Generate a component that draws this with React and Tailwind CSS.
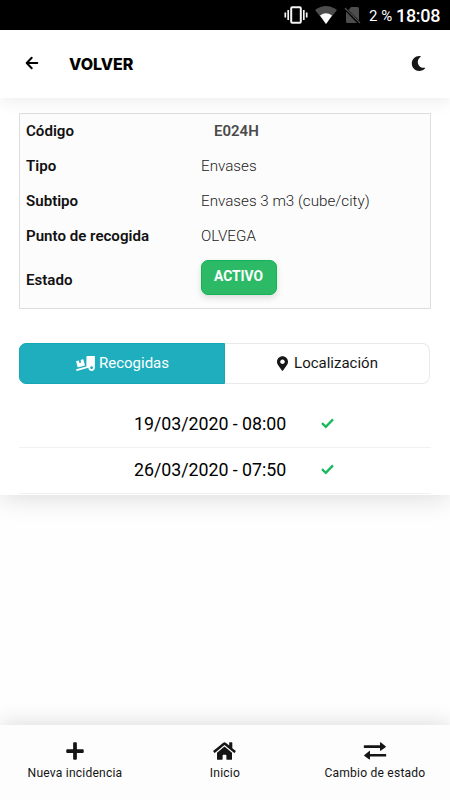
import { FaMoon, FaTruckLoading, FaMapMarkerAlt, FaPlus, FaHome } from 'react-icons/fa';

function StatusBar() {
  return (
    <div className="flex h-[30px] items-center justify-end bg-black pr-[10px] text-white">
      <svg className="h-[20px] w-[24px]" viewBox="0 0 24 20" fill="none" stroke="#f4f4f4">
        <rect x="7.2" y="2.2" width="9.6" height="15.6" rx="1" strokeWidth="2" />
        <path d="M4.2 5v10M19.8 5v10" strokeWidth="1.7" />
        <path d="M1.3 7.5v5M22.7 7.5v5" strokeWidth="1.7" />
      </svg>
      <svg className="ml-[7px] h-[18px] w-[22px]" viewBox="0 0 22 18">
        <path d="M0 4Q11-3.8 22 4L11 18Z" fill="#4d4d4d" />
        <path d="M5 9.5Q11 5 17 9.5L11 18Z" fill="#fff" />
      </svg>
      <svg className="ml-[7px] h-[18px] w-[17px]" viewBox="0 0 17 18">
        <path d="M7 1h6.5q1.5 0 1.5 1.500V14.500L4.500 4Z M2 5.500 13 17H3.500Q2 17 2 15.500Z" fill="#4d4d4d" />
        <path d="M1 2 16 17" stroke="#4d4d4d" strokeWidth="1.300" />
      </svg>
      <span className="mt-[1px] ml-[8px] w-[27px] whitespace-nowrap text-[15px] leading-[30px]">2 %</span>
      <span className="mt-[2px] w-[44px] whitespace-nowrap text-[18px] font-medium leading-[30px] tracking-[-0.3px]">18:08</span>
    </div>
  );
}

function Row({ label, children }) {
  return (
    <div className="flex h-[35px] items-center">
      <span className="w-[175px] text-[15.1px] font-semibold text-[#111]">{label}</span>
      {children}
    </div>
  );
}

function Value({ children }) {
  return <span className="text-[15.2px] font-light text-[#222]">{children}</span>;
}

function Pickup({ date }) {
  return (
    <div className="flex h-[46px] items-center border-b border-[#f1f1f1]">
      <span className="ml-[115px] w-[187px] whitespace-nowrap text-[17.8px] tracking-[-0.02px] text-black">{date}</span>
      <svg className="mb-[4px] h-[12px] w-[13px]" viewBox="0 0 13 12" fill="none" stroke="#17b95c" strokeWidth="2.3">
        <path d="M1 6.200 4.800 9.800 12 2.400" />
      </svg>
    </div>
  );
}

function NavItem({ icon, label }) {
  return (
    <div className="flex w-1/3 flex-col items-center pt-[16px] text-[#151515]">
      {icon}
      <span className="mt-[3px] whitespace-nowrap text-[12.1px] leading-[18px] tracking-[0.2px]">{label}</span>
    </div>
  );
}

export default function App() {
  return (
    <div className="flex h-[800px] w-[450px] flex-col overflow-hidden bg-[#fefefe] font-['Roboto',sans-serif]">
      <StatusBar />
      <header className="relative z-10 flex h-[68px] shrink-0 items-center bg-white pl-[25px] pr-[24px] shadow-[0_4px_16px_rgba(0,0,0,0.07)]">
        <svg className="mb-[2px] h-[14px] w-[14px]" viewBox="0 0 14 14" fill="none" stroke="#000" strokeWidth="2" strokeLinecap="round" strokeLinejoin="round">
          <path d="M6.700 1.800 1.700 7l5 5.200M2 7h10.300" />
        </svg>
        <h1 className="ml-[30px] font-['Inter',sans-serif] text-[16px] font-extrabold text-black">VOLVER</h1>
        <FaMoon className="mb-[2px] ml-auto size-[15px] text-[#171717]" />
      </header>
      <main className="h-[397px] shrink-0 bg-white px-[19px] pt-[15px] shadow-[0_4px_24px_rgba(0,0,0,0.13)]">
        <section className="h-[196px] w-[412px] border border-[#dedede] bg-[#fcfcfc] pl-[6px]">
          <Row label="Código">
            <span className="ml-[13px] text-[15px] font-semibold text-[#4a4a4a]">E024H</span>
          </Row>
          <Row label="Tipo"><Value>Envases</Value></Row>
          <Row label="Subtipo"><Value>Envases 3 m3 (cube/city)</Value></Row>
          <Row label="Punto de recogida"><Value>OLVEGA</Value></Row>
          <div className="mt-[6px] flex h-[35px] items-center">
            <span className="mt-[6px] w-[175px] text-[15.1px] font-semibold text-[#111]">Estado</span>
            <span className="flex h-[35px] w-[76px] justify-center rounded-[7px] border border-[#12b455] bg-[#2dba67] pr-[1px] text-[13.8px] font-bold leading-[31px] text-white shadow-[0_3px_6px_rgba(0,0,0,0.13)]">ACTIVO</span>
          </div>
        </section>
        <div className="mt-[34px] flex h-[41px] w-[411px]">
          <div className="flex w-[206px] items-center justify-center gap-[4px] rounded-l-[7px] border border-[#16a7b7] bg-[#1faebe] pl-[1px] text-[15px] text-white">
            <FaTruckLoading className="h-[15px] w-[19px]" />
            <span>Recogidas</span>
          </div>
          <div className="flex w-[205px] items-center justify-center gap-[6px] rounded-r-[8px] border border-l-0 border-[#e9e9e9] pl-[1px] text-[15px] text-[#171717]">
            <FaMapMarkerAlt className="h-[15px] w-[11px]" />
            <span>Localización</span>
          </div>
        </div>
        <div className="mt-[18px]">
          <Pickup date="19/03/2020 - 08:00" />
          <Pickup date="26/03/2020 - 07:50" />
        </div>
      </main>
      <nav className="mt-auto flex h-[75px] shrink-0 bg-[#fdfdfd] shadow-[0_-3px_20px_rgba(0,0,0,0.12)]">
        <NavItem icon={<FaPlus className="size-[20px]" />} label="Nueva incidencia" />
        <NavItem icon={<FaHome className="h-[20px] w-[25px]" />} label="Inicio" />
        <NavItem
          icon={
            <svg className="h-[20px] w-[24px]" viewBox="0 0 24 20" fill="currentColor">
              <path d="M1.500 4.300H17V2q0-1.300 1-.4l4.600 3.700q.7.500 0 1L18 9.600q-1 .8-1-.5V6.900H1.500Q.8 6.900.8 6.300V5q0-.7.7-.7Z" />
              <path d="M22.500 12.900H7v-2.300q0-1.300-1-.4l-4.600 3.700q-.7.500 0 1L6 18.200q1 .8 1-.5v-2.200h15.500q.7 0 .7-.6v-1.300q0-.7-.7-.7Z" />
            </svg>
          }
          label="Cambio de estado"
        />
      </nav>
    </div>
  );
}
